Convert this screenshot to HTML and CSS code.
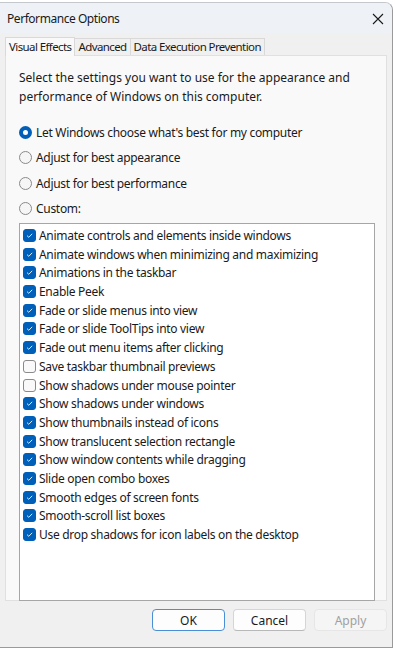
FILE: index.html
```html
<!DOCTYPE html>
<html lang="en">
<head>
    <meta charset="UTF-8">
    <meta name="viewport" content="width=device-width, initial-scale=1.0">
    <title>Performance Options</title>
    <link rel="stylesheet" href="styles.css">
</head>
<body>
    <div class="window">
        <div class="titlebar">
            <span class="title">Performance Options</span>
            <svg class="close" width="12" height="12" viewBox="0 0 12 12">
                <path d="M1 1 L11 11 M11 1 L1 11" stroke="#1a1a1a" stroke-width="1.1" fill="none"/>
            </svg>
        </div>
        <div class="content">
            <div class="tabs">
                <div class="tab active">Visual Effects</div>
                <div class="tab">Advanced</div>
                <div class="tab">Data Execution Prevention</div>
            </div>
            <div class="panel">
                <p class="intro">Select the settings you want to use for the appearance and performance of Windows on this computer.</p>
                <div class="radios">
                    <label class="radio"><span class="dot on"></span>Let Windows choose what's best for my computer</label>
                    <label class="radio"><span class="dot"></span>Adjust for best appearance</label>
                    <label class="radio"><span class="dot"></span>Adjust for best performance</label>
                    <label class="radio"><span class="dot"></span>Custom:</label>
                </div>
                <div class="list">
                    <div class="item"><span class="box on"></span>Animate controls and elements inside windows</div>
                    <div class="item"><span class="box on"></span>Animate windows when minimizing and maximizing</div>
                    <div class="item"><span class="box on"></span>Animations in the taskbar</div>
                    <div class="item"><span class="box on"></span>Enable Peek</div>
                    <div class="item"><span class="box on"></span>Fade or slide menus into view</div>
                    <div class="item"><span class="box on"></span>Fade or slide ToolTips into view</div>
                    <div class="item"><span class="box on"></span>Fade out menu items after clicking</div>
                    <div class="item"><span class="box"></span>Save taskbar thumbnail previews</div>
                    <div class="item"><span class="box"></span>Show shadows under mouse pointer</div>
                    <div class="item"><span class="box on"></span>Show shadows under windows</div>
                    <div class="item"><span class="box on"></span>Show thumbnails instead of icons</div>
                    <div class="item"><span class="box on"></span>Show translucent selection rectangle</div>
                    <div class="item"><span class="box on"></span>Show window contents while dragging</div>
                    <div class="item"><span class="box on"></span>Slide open combo boxes</div>
                    <div class="item"><span class="box on"></span>Smooth edges of screen fonts</div>
                    <div class="item"><span class="box on"></span>Smooth-scroll list boxes</div>
                    <div class="item"><span class="box on"></span>Use drop shadows for icon labels on the desktop</div>
                </div>
            </div>
            <div class="buttons">
                <button class="default">OK</button>
                <button>Cancel</button>
                <button disabled>Apply</button>
            </div>
        </div>
    </div>
</body>
</html>
```

FILE: styles.css
```css
body {
    margin: 0;
    background-color: #ffffff;
    font-family: "Noto Sans", "Open Sans", sans-serif;
    font-size: 12px;
    color: #1a1a1a;
}
.window {
    margin-top: 2px;
    width: 392px;
    height: 644px;
    border-top: 1px solid #c4c7cc;
    border-right: 1px solid #9a9a9a;
    border-bottom: 1px solid #9a9a9a;
    border-top-right-radius: 8px;
    background-color: #f0f0f0;
    overflow: hidden;
    display: flex;
    flex-direction: column;
}
.titlebar {
    height: 30px;
    background-color: #eef2f7;
    display: flex;
    align-items: center;
    justify-content: space-between;
    padding: 0 8px 0 7px;
}
.title {
    font-size: 12px;
    letter-spacing: -0.45px;
}
.close {
    margin-top: 1px;
}
.content {
    flex: 1;
    padding: 4px 5px 0 5px;
    display: flex;
    flex-direction: column;
}
.tabs {
    display: flex;
    height: 18px;
    align-items: flex-end;
}
.tab {
    height: 16px;
    line-height: 16px;
    padding: 0 3px;
    border: 1px solid #d9d9d9;
    border-bottom: none;
    margin-left: -1px;
    background-color: #f0f0f0;
    font-size: 11.5px;
    letter-spacing: -0.6px;
}
.tab:first-child {
    margin-left: 0;
}
.tab.active {
    height: 18px;
    line-height: 18px;
    background-color: #f9f9f9;
    position: relative;
    z-index: 1;
    margin-bottom: -1px;
}
.panel {
    background-color: #f9f9f9;
    border: 1px solid #e0e0e0;
    height: 532px;
    padding: 12px 11px 0 13px;
}
.intro {
    margin: 0;
    line-height: 19px;
    width: 340px;
}
.radios {
    margin-top: 14px;
}
.radio {
    display: flex;
    align-items: center;
    height: 25.3px;
    letter-spacing: -0.3px;
}
.dot {
    width: 11px;
    height: 11px;
    border: 1px solid #8a8a8a;
    border-radius: 50%;
    background-color: #f6f6f6;
    margin-right: 4px;
}
.dot.on {
    width: 5px;
    height: 5px;
    border: 4px solid #005fb8;
    background-color: #ffffff;
}
.list {
    margin-top: 2px;
    height: 374px;
    background-color: #ffffff;
    border: 1px solid #a6a6a6;
    padding: 2px 3px 0 3px;
}
.item {
    display: flex;
    align-items: center;
    height: 18.7px;
    letter-spacing: -0.3px;
}
.box {
    width: 11px;
    height: 11px;
    border: 1px solid #8a8a8a;
    border-radius: 3px;
    background-color: #f9f9f9;
    margin-right: 3px;
}
.box.on {
    border-color: #005fb8;
    background-color: #005fb8;
    background-image: url("data:image/svg+xml,%3Csvg xmlns='http://www.w3.org/2000/svg' width='11' height='11'%3E%3Cpath d='M3 5.6 L4.8 7.3 L8.2 3.8' stroke='%23dfe9f5' stroke-width='1' fill='none'/%3E%3C/svg%3E");
}
.buttons {
    display: flex;
    justify-content: flex-end;
    gap: 8px;
    margin-top: 8px;
}
.buttons button {
    width: 73px;
    height: 22px;
    font-family: "Noto Sans", "Open Sans", sans-serif;
    font-size: 12px;
    color: #1a1a1a;
    background-color: #fdfdfd;
    border: 1px solid #d5d5d5;
    border-bottom-color: #b8b8b8;
    border-radius: 4px;
    padding: 0;
}
.buttons button.default {
    border: 1px solid #4a8fd6;
}
.buttons button:disabled {
    background-color: #f5f5f5;
    border-color: #e6e6e6;
    color: #a0a0a0;
}
```
